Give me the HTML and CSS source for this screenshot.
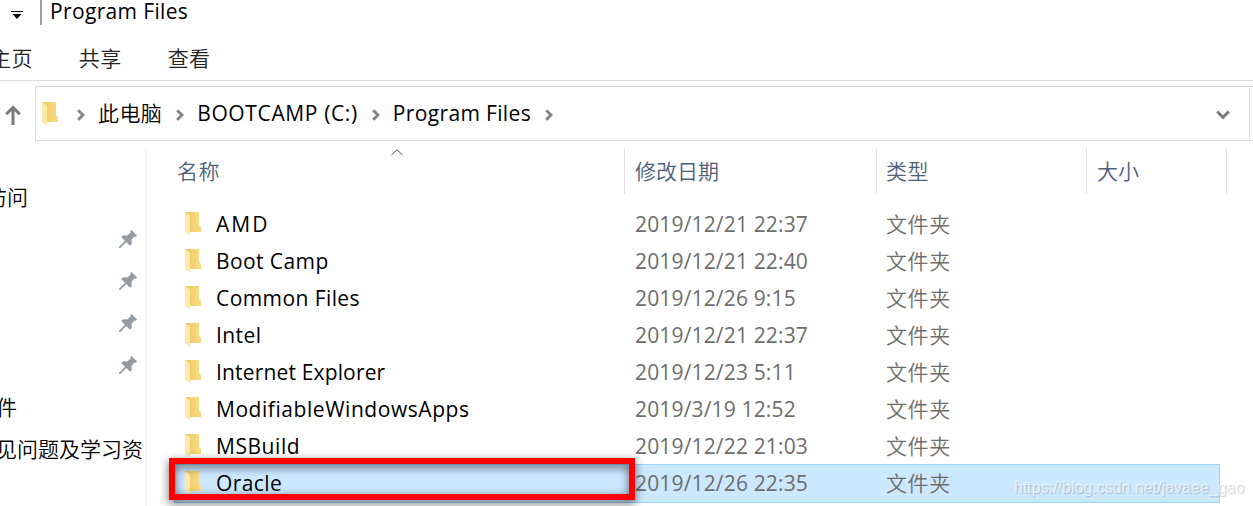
FILE: index.html
```html
<!DOCTYPE html>
<html lang="zh-CN">
  <head>
    <meta charset="UTF-8" />
    <title>Program Files</title>
    <link rel="stylesheet" href="styles.css" />
  </head>
  <body>
    <!-- shared icons -->
    <svg class="defs" width="0" height="0">
      <linearGradient id="gold" x1="0" x2="1">
        <stop offset="0" stop-color="#ecc568" />
        <stop offset="1" stop-color="#fadd80" />
      </linearGradient>
      <symbol id="folder" viewBox="0 0 16 24">
        <path d="M0 0h14v13l2 2v5H0z" fill="url(#gold)" />
        <path d="M0 0l5 3.5v20L0 20z" fill="#ffe9a6" />
      </symbol>
      <symbol id="pin" viewBox="0 0 18 18">
        <path d="M12.5 0L18 5.500l-1.200 1.200-1.300-.3-3 3.300.3 4.300-1.800 1.800-3.700-3.800L1.300 18H0v-1.300L6 10.700 2.200 7 4 5.200l4.300.3 3.300-3-.3-1.300z" fill="#929ca3" />
      </symbol>
      <symbol id="chevron" viewBox="0 0 8 12">
        <path d="M1.200 1.200L6 6 1.200 10.800" fill="none" stroke="#868686" stroke-width="3" />
      </symbol>
    </svg>

    <header class="titlebar">
      <svg class="quick" width="12" height="9" viewBox="0 0 12 9">
        <path d="M0 .5h12" stroke="#000" />
        <path d="M1.500 3h9L6 8z" />
      </svg>
      <span class="divider"></span>
      <h1 class="title">Program Files</h1>
    </header>

    <nav class="tabs">
      <span>主页</span>
      <span>共享</span>
      <span>查看</span>
    </nav>

    <div class="toolbar">
      <svg class="up" width="17" height="20" viewBox="0 0 17 20">
        <path d="M8 20V2M1.200 9.200L8 2.400l6.800 6.800" fill="none" stroke="#7b7b7b" stroke-width="3" />
      </svg>
      <div class="address">
        <svg class="folder"><use href="#folder" /></svg>
        <svg class="chevron"><use href="#chevron" /></svg>
        <span class="crumb pc">此电脑</span>
        <svg class="chevron"><use href="#chevron" /></svg>
        <span class="crumb drive">BOOTCAMP (C:)</span>
        <svg class="chevron"><use href="#chevron" /></svg>
        <span class="crumb current">Program Files</span>
        <svg class="chevron"><use href="#chevron" /></svg>
        <svg class="dropdown" width="14" height="10" viewBox="0 0 14 10">
          <path d="M1.200 1.500L7 7.300l5.800-5.800" fill="none" stroke="#7d7d7d" stroke-width="3" />
        </svg>
      </div>
      <div class="refresh"></div>
    </div>

    <main class="explorer">
      <aside class="sidebar">
        <div class="side-item quick-access">访问</div>
        <div class="side-item pinned"><svg class="pin"><use href="#pin" /></svg></div>
        <div class="side-item pinned"><svg class="pin"><use href="#pin" /></svg></div>
        <div class="side-item pinned"><svg class="pin"><use href="#pin" /></svg></div>
        <div class="side-item pinned"><svg class="pin"><use href="#pin" /></svg></div>
        <div class="side-item">件</div>
        <div class="side-item">见问题及学习资</div>
      </aside>

      <section class="files">
        <div class="row head">
          <span class="name">名称
            <svg class="sort" width="12" height="7" viewBox="0 0 12 7">
              <path d="M.5 6L6 .8 11.500 6" fill="none" stroke="#555" />
            </svg>
          </span>
          <span>修改日期</span>
          <span>类型</span>
          <span>大小</span>
        </div>
        <div class="row">
          <span class="name caps"><svg class="folder"><use href="#folder" /></svg>AMD</span>
          <span>2019/12/21 22:37</span>
          <span>文件夹</span>
        </div>
        <div class="row">
          <span class="name"><svg class="folder"><use href="#folder" /></svg>Boot Camp</span>
          <span>2019/12/21 22:40</span>
          <span>文件夹</span>
        </div>
        <div class="row">
          <span class="name"><svg class="folder"><use href="#folder" /></svg>Common Files</span>
          <span>2019/12/26 9:15</span>
          <span>文件夹</span>
        </div>
        <div class="row">
          <span class="name"><svg class="folder"><use href="#folder" /></svg>Intel</span>
          <span>2019/12/21 22:37</span>
          <span>文件夹</span>
        </div>
        <div class="row">
          <span class="name narrow"><svg class="folder"><use href="#folder" /></svg>Internet Explorer</span>
          <span>2019/12/23 5:11</span>
          <span>文件夹</span>
        </div>
        <div class="row">
          <span class="name wide"><svg class="folder"><use href="#folder" /></svg>ModifiableWindowsApps</span>
          <span>2019/3/19 12:52</span>
          <span>文件夹</span>
        </div>
        <div class="row">
          <span class="name wide"><svg class="folder"><use href="#folder" /></svg>MSBuild</span>
          <span>2019/12/22 21:03</span>
          <span>文件夹</span>
        </div>
        <div class="row selected">
          <span class="name"><svg class="folder"><use href="#folder" /></svg>Oracle</span>
          <span>2019/12/26 22:35</span>
          <span>文件夹</span>
          <div class="highlight"></div>
        </div>
      </section>
    </main>

    <div class="watermark">https://blog.csdn.net/javaee_gao</div>
  </body>
</html>
```
FILE: styles.css
```css
* {
  box-sizing: border-box;
}

body {
  position: relative;
  width: 1253px;
  height: 506px;
  margin: 0;
  overflow: hidden;
  background-color: white;
  color: #000;
  font-family: "Open Sans", "Noto Sans CJK SC", sans-serif;
  font-size: 21px;
  line-height: 30px;
  white-space: nowrap;
}

svg {
  display: block;
  flex-shrink: 0;
}

.defs {
  position: absolute;
}

.titlebar {
  display: flex;
  height: 38px;
}

.quick {
  margin: 11px 0 0 11px;
}

.divider {
  width: 2px;
  height: 25px;
  margin-left: 17px;
  background-color: #a0a0a0;
}

.title {
  margin: -4px 0 0 8px;
  font-size: 21px;
  font-weight: 400;
  letter-spacing: 0.35px;
}

.tabs {
  display: flex;
  gap: 46px;
  height: 43px;
  margin-left: -10px;
  padding-top: 5px;
  border-bottom: 1px solid #dadada;
  color: #222;
  font-weight: 350;
  letter-spacing: 0.4px;
}

.toolbar {
  display: flex;
  height: 55px;
  margin-top: 5px;
}

.up {
  margin: 19px 13px 0 5px;
}

.address {
  display: flex;
  align-items: center;
  width: 1215px;
  padding-left: 6px;
  border: 1px solid #d9d9d9;
}

.refresh {
  flex: 1;
  border: 1px solid #d9d9d9;
  border-width: 1px 0;
}

.folder {
  width: 16px;
  height: 24px;
}

.chevron {
  width: 8px;
  height: 12px;
  margin: 2px 13px 0 14px;
}

.address .folder + .chevron {
  margin-left: 19px;
}

.dropdown {
  margin: 2px 19px 0 auto;
}

.crumb {
  margin-top: -2px;
}

.pc {
  font-weight: 350;
  letter-spacing: 0.4px;
}

.drive {
  letter-spacing: 0.63px;
}

.current {
  letter-spacing: 0.35px;
}

.explorer {
  display: flex;
  height: 358px;
  margin-top: 7px;
}

.sidebar {
  width: 147px;
  padding-top: 28px;
  overflow: hidden;
  border-right: 2px solid #f5f5f5;
  font-weight: 350;
}

.side-item {
  height: 42px;
  margin-left: -4px;
  line-height: 42px;
}

.quick-access {
  margin-left: -14px;
}

.pinned {
  padding: 12px 0 0 123px;
}

.pin {
  width: 18px;
  height: 18px;
}

.files {
  width: 1080px;
  padding-left: 27px;
}

.row {
  display: grid;
  grid-template-columns: 451px 252px 210px 140px;
  height: 37px;
  color: #6d6d6d;
  letter-spacing: 0.16px;
  line-height: 39px;
}

.row > span {
  padding-left: 10px;
}

.row .name {
  display: flex;
  align-items: center;
  gap: 15px;
  padding-left: 11px;
  color: #000;
  letter-spacing: 0.42px;
}

.row .folder {
  margin-bottom: 1px;
}

.row .caps {
  letter-spacing: 2px;
}

.row .narrow {
  letter-spacing: 0.16px;
}

.row .wide {
  letter-spacing: 0.55px;
}

.row span:nth-child(3) {
  padding-left: 9px;
  font-weight: 350;
  letter-spacing: 0.6px;
}

.head {
  height: 46px;
  margin-bottom: 11px;
  color: #4c607a;
  font-weight: 350;
  letter-spacing: 0;
  line-height: 46px;
}

.head > span {
  border-right: 1px solid #e2e2e2;
}

.head .name {
  position: relative;
  padding-left: 3px;
  color: #4c607a;
  letter-spacing: 0.6px;
}

.sort {
  position: absolute;
  top: 1px;
  left: 217px;
}

.selected {
  position: relative;
  width: 1046px;
  height: 39px;
  border: 1px solid #99d1ff;
  background-color: #cce8ff;
  line-height: 37px;
}

.selected > span {
  margin-left: -1px;
}

.highlight {
  position: absolute;
  top: -7px;
  left: -6px;
  width: 466px;
  height: 42px;
  border: 6px solid #fe0000;
  filter: drop-shadow(0 3px 5px rgba(0, 0, 0, 0.65));
}

.watermark {
  position: absolute;
  top: 473px;
  left: 1014px;
  color: rgba(255, 255, 255, 0.65);
  font-family: "Liberation Sans", Arial, sans-serif;
  font-size: 16px;
  text-shadow: 1px 1px 1px rgba(0, 0, 0, 0.2);
}
```
